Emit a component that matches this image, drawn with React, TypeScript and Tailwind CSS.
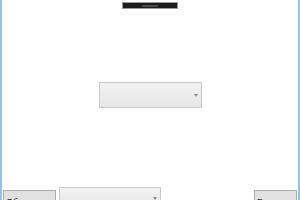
function Arrow() {
  return (
    <svg width="4" height="3" viewBox="0 0 4 3" className="shrink-0">
      <path d="M0 0h4L2 3z" fill="#8a8a8a" />
    </svg>
  );
}

function Dropdown({ className }: { className: string }) {
  return (
    <div
      className={`flex items-center justify-end border border-[#c9c9c9] bg-gradient-to-b from-[#f2f2f2] to-[#e6e6e6] pr-[3px] ${className}`}
    >
      <Arrow />
    </div>
  );
}

export default function App() {
  return (
    <div
      className="flex h-[200px] w-[300px] flex-col overflow-hidden border-x-2 border-[#8fc3ef] bg-white text-[9px] text-[#222]"
      style={{ fontFamily: '"Liberation Sans", Arial, sans-serif' }}
    >
      <div className="mt-[2px] flex h-[7px] w-[56px] shrink-0 items-center justify-center self-center border border-[#9a9a9a] bg-[#1c1c1c]">
        <div className="h-[2px] w-[16px] bg-[#4a4a4a]" />
      </div>

      <Dropdown className="mt-[73px] h-[26px] w-[103px] shrink-0 self-center" />

      <div className="mt-[79px] flex shrink-0 items-start pl-[1px] pr-[1px]">
        <button className="mt-[3px] h-[20px] w-[53px] shrink-0 overflow-hidden border border-[#adadad] bg-[#e1e1e1] px-[2px] pt-[4px] text-left leading-[10px] whitespace-nowrap">
          Обновить таблицу
        </button>
        <Dropdown className="ml-[3px] h-[22px] w-[102px] shrink-0 items-end pb-[8px]" />
        <div className="flex-1" />
        <button className="mt-[3px] h-[20px] w-[43px] shrink-0 overflow-hidden border border-[#adadad] bg-[#e1e1e1] px-[2px] pt-[4px] text-left leading-[10px] whitespace-nowrap">
          Выполнить
        </button>
      </div>
    </div>
  );
}
